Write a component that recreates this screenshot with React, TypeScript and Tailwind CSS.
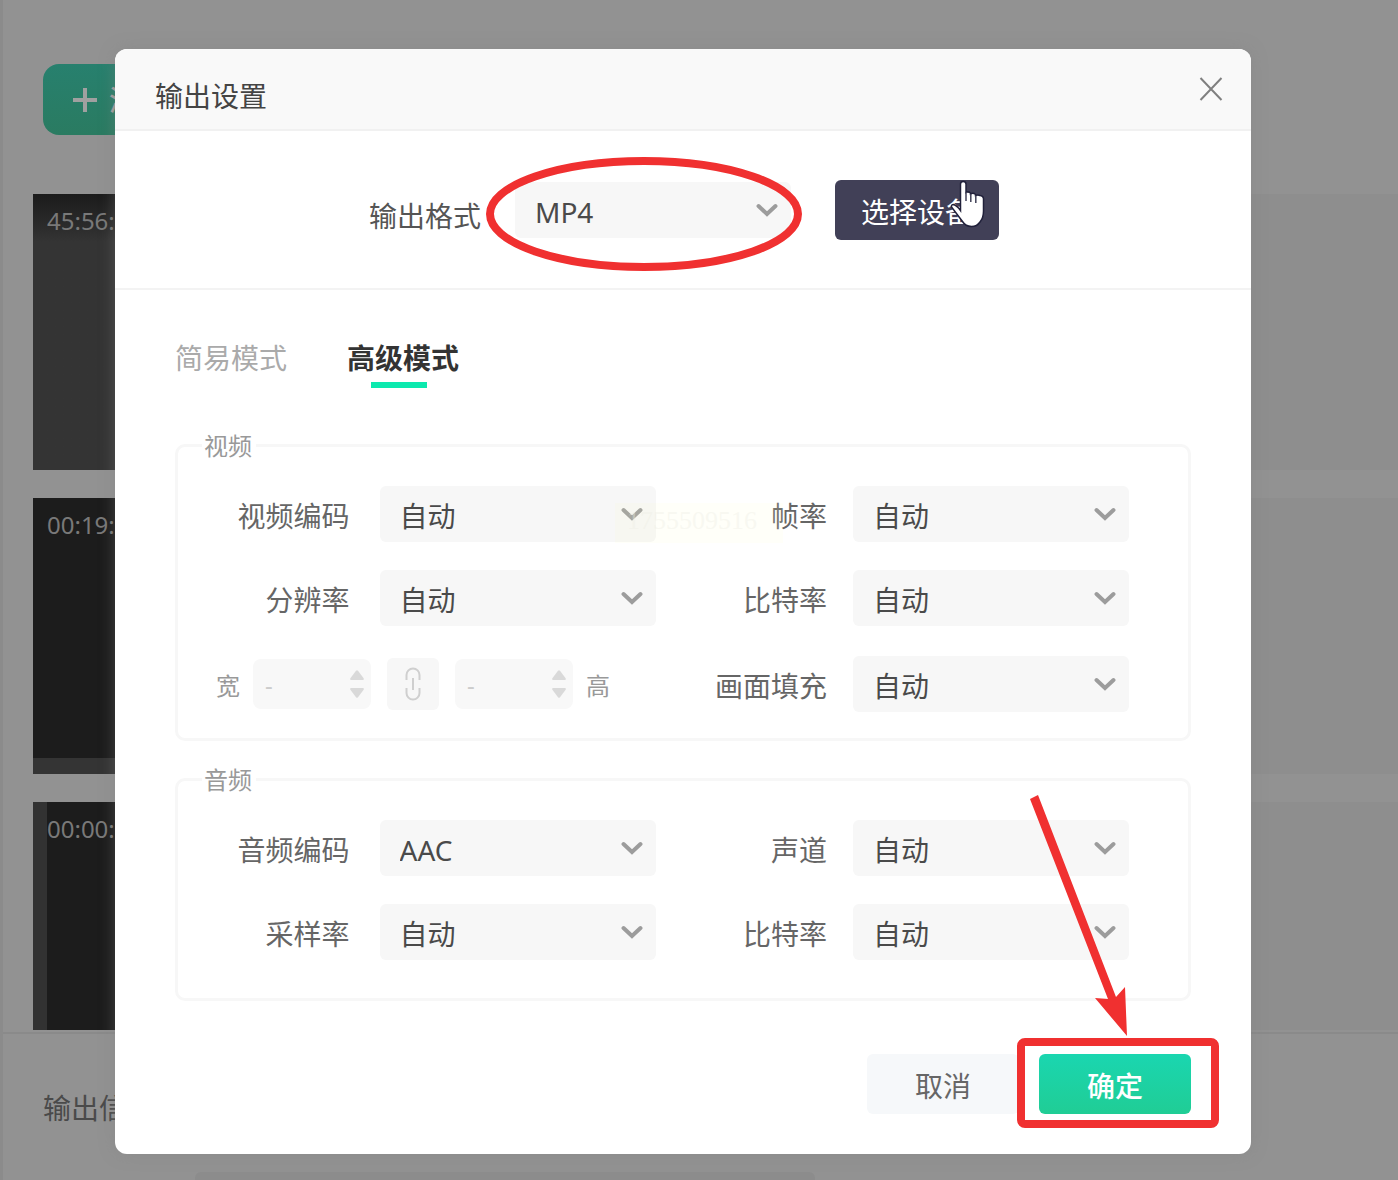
import type { ReactNode } from 'react';

const selectClass =
  'h-14 w-full appearance-none rounded-md bg-[#f7f7f7] pl-5 pr-12 pt-1 text-[28px] leading-[52px] text-[#4a4a4a] outline-none';

function Chevron() {
  return (
    <svg viewBox="0 0 22 14" className="pointer-events-none absolute right-[13px] top-[21px] h-3.5 w-[22px]" fill="none">
      <path d="M2.5 3 11 11l8.5-8" stroke="#9c9c9c" strokeWidth="4" strokeLinecap="round" />
    </svg>
  );
}

function SelectBox({ id, value }: { id: string; value: string }) {
  return (
    <div className="relative w-[276px] shrink-0">
      <select id={id} defaultValue={value} className={selectClass}>
        <option>{value}</option>
      </select>
      <Chevron />
    </div>
  );
}

function Field({ id, label, value, wide }: { id: string; label: string; value: string; wide?: boolean }) {
  return (
    <div className={`flex items-center justify-end ${wide ? 'gap-[30px]' : 'gap-[26px]'}`}>
      <label htmlFor={id} className="pt-1 text-[28px] leading-9 text-[#666]">
        {label}
      </label>
      <SelectBox id={id} value={value} />
    </div>
  );
}

function SizeInput({ id }: { id: string }) {
  return (
    <div className="relative w-[118px]">
      <input
        id={id}
        type="text"
        disabled
        defaultValue="-"
        className="h-[50px] w-full rounded-lg bg-[#f8f8f8] pl-3 text-2xl text-[#ccc]"
      />
      <svg viewBox="0 0 14 28" className="absolute right-[7px] top-[11px] h-7 w-3.5" fill="#d9d9d9">
        <path d="M6 .8q1-1 2 0l5.6 7.4q.8 1.8-.8 1.8H1.2q-1.6 0-.8-1.8z" />
        <path d="M6 27.2q1 1 2 0l5.6-7.4q.8-1.8-.8-1.8H1.2q-1.6 0-.8 1.8z" />
      </svg>
    </div>
  );
}

function Group({ title, className, children }: { title: string; className: string; children: ReactNode }) {
  return (
    <fieldset className={`rounded-[10px] border-[3px] border-[#f7f7f7] pl-1 pr-[59px] pt-[27px] ${className}`}>
      <legend className="ml-5 pl-0.5 pr-1 text-2xl leading-[27px] text-[#999]">{title}</legend>
      <div className="grid grid-cols-2 gap-y-7">{children}</div>
    </fieldset>
  );
}

function HandCursor() {
  return (
    <svg viewBox="0 0 38 50" className="pointer-events-none absolute right-3 top-0 h-[50px] w-[38px]">
      <path
        d="M11.500 4q0-2.500 2.700-2.500T17 4v8.500q2.200-1.500 4.500.5v1q2.700-1.500 5 .5v1q2.500-1 4.500 0 3.500.5 3.500 3.500v12q0 7-3.500 11-3 4.500-8.500 4.500-6 0-9-5L2.500 27q-.5-2.500 2-2.500 3.500 1 7 6z"
        fill="#fff"
        stroke="#20203a"
        strokeWidth="1.500"
      />
      <path d="M17 12v9M21.800 14v8M26.800 15.500v7.500" stroke="#414057" strokeWidth="1.500" />
    </svg>
  );
}

function TaskList() {
  return (
    <div className="flex min-h-0 flex-1 flex-col gap-7 overflow-hidden pl-[33px] text-2xl leading-8 text-[#797979]">
      <div className="h-[276px] shrink-0 bg-[#8e8e8e]">
        <div className="h-full w-[490px] bg-linear-to-b from-[#1b1b1b] to-[#343434] to-[48px] px-3.5 pt-[11px]">
          45:56:
        </div>
      </div>
      <div className="h-[276px] shrink-0 bg-[#8e8e8e]">
        <div className="h-full w-[490px] border-b-16 border-[#343434] bg-[#1c1c1c] px-3.5 pt-[11px]">00:19:</div>
      </div>
      <div className="h-[276px] shrink-0 bg-[#8e8e8e]">
        <div className="h-full w-[490px] border-l-14 border-[#323232] bg-[#1c1c1c] pt-[11px]">00:00:</div>
      </div>
    </div>
  );
}

export default function App() {
  return (
    <div className="relative min-h-screen overflow-hidden bg-[#929292] font-['Noto_Sans','Noto_Sans_CJK_SC',sans-serif]">
      <div className="flex h-screen flex-col border-l-3 border-[#8b8b8b]">
        <div className="-ml-[3px] flex h-[194px] shrink-0 items-start pl-[43px] pt-16">
          <button className="flex h-[71px] w-[210px] items-center gap-3 rounded-2xl bg-linear-to-b from-[#27806e] to-[#2a7b61] pl-[30px] text-[28px] font-medium text-[#a0a0a0]">
            <svg viewBox="0 0 24 24" className="h-6 w-6" fill="none" stroke="#a0a0a0" strokeWidth="4">
              <path d="M12 0v24M0 12h24" />
            </svg>
            添
          </button>
        </div>
        <div className="-ml-[3px] flex min-h-0 flex-1 flex-col">
          <TaskList />
        </div>
        <div className="mt-0.5 flex h-[148px] shrink-0 flex-col justify-between border-t-2 border-[#8a8a8a] pl-10 pt-[54px]">
          <span className="text-[28px] leading-10 text-[#4a4a4a]">输出信息</span>
          <div className="ml-[152px] h-2 w-[620px] rounded-t-md bg-[#8c8c8c]" />
        </div>
      </div>

      <div className="absolute inset-0 pl-[115px] pr-[147px] pt-[49px]">
        <div
          role="dialog"
          aria-labelledby="dialog-title"
          className="overflow-hidden rounded-xl bg-white pb-10 shadow-[0_0_16px_rgba(128,128,128,0.4)]"
        >
          <header className="flex h-[82px] items-center justify-between border-b-2 border-[#f1f1f1] bg-[#f9f9f9] pl-10 pr-7">
            <h1 id="dialog-title" className="pt-3.5 text-[28px] leading-9 text-[#444]">
              输出设置
            </h1>
            <button aria-label="关闭" className="h-6 w-6">
              <svg viewBox="0 0 24 24" fill="none" stroke="#808080" strokeWidth="2">
                <path d="M1.500 1 22.500 23M22.500 1 1.500 23" />
              </svg>
            </button>
          </header>

          <section className="flex h-[159px] items-center border-b-2 border-[#f3f3f3] pl-[254px]">
            <label htmlFor="format" className="mr-[34px] pt-3 text-[28px] leading-9 text-[#555]">
              输出格式
            </label>
            <div className="relative mr-11">
              <SelectBox id="format" value="MP4" />
              <svg
                viewBox="0 0 316 116"
                className="pointer-events-none absolute -left-[29px] -top-[26px] h-[116px] w-[316px] max-w-none"
                fill="none"
              >
                <ellipse cx="158" cy="58" rx="154" ry="53" stroke="#f03030" strokeWidth="8" />
              </svg>
            </div>
            <button className="relative h-[60px] w-[164px] rounded-md bg-[#414057] pt-1 text-[28px] leading-9 text-white">
              选择设备
              <HandCursor />
            </button>
          </section>

          <div className="px-[60px] pt-[50px]">
            <nav className="flex gap-[60px] text-[28px] leading-9">
              <button className="h-12 pb-3 text-[#aaa]">简易模式</button>
              <button className="relative h-12 pb-3 font-bold text-[#333]">
                高级模式
                <span className="absolute bottom-0 left-6 h-1.5 w-14 bg-[#0ce9ae]" />
              </button>
            </nav>

            <div className="relative mt-11">
              <Group title="视频" className="pb-6">
                <Field id="vcodec" label="视频编码" value="自动" wide />
                <Field id="fps" label="帧率" value="自动" />
                <Field id="resolution" label="分辨率" value="自动" wide />
                <Field id="vbitrate" label="比特率" value="自动" />
                <div className="flex h-[60px] items-center gap-[13px] pl-[34px] text-2xl text-[#999]">
                  <label htmlFor="width" className="pt-1">宽</label>
                  <div className="flex items-center gap-4">
                    <SizeInput id="width" />
                    <button disabled aria-label="锁定比例" className="flex h-[52px] w-[52px] items-center justify-center rounded-md bg-[#f7f7f7]">
                      <svg viewBox="0 0 16 34" className="h-[34px] w-4" fill="none" stroke="#cfcfcf" strokeWidth="2">
                        <path d="M1.500 13V8a6.500 6.500 0 0 1 13 0v5M1.500 21v5a6.500 6.500 0 0 0 13 0v-5M8 11v12" />
                      </svg>
                    </button>
                    <SizeInput id="height" />
                  </div>
                  <label htmlFor="height" className="pt-1">高</label>
                </div>
                <Field id="fill" label="画面填充" value="自动" />
              </Group>
              <span className="pointer-events-none absolute left-[440px] top-[71px] h-10 w-[168px] bg-[#ffffc8]/10 pl-3 font-['Liberation_Serif',serif] text-[26px] leading-9 text-[#eeeee4]/40">
                1755509516
              </span>
            </div>

            <Group title="音频" className="mt-[25px] pb-[38px]">
              <Field id="acodec" label="音频编码" value="AAC" wide />
              <Field id="channel" label="声道" value="自动" />
              <Field id="samplerate" label="采样率" value="自动" wide />
              <Field id="abitrate" label="比特率" value="自动" />
            </Group>

            <footer className="mt-[53px] flex justify-end gap-5 text-[28px] leading-9">
              <button className="h-[60px] w-[152px] rounded-md bg-[#f6f8fa] pt-1 text-[#666]">取消</button>
              <div className="relative">
                <button className="h-[60px] w-[152px] rounded-md bg-linear-to-b from-[#1ad6b0] to-[#20cd95] pt-1 font-medium text-white">
                  确定
                </button>
                <span className="pointer-events-none absolute -bottom-3.5 -left-[22px] -right-7 -top-4 rounded-lg border-8 border-[#f03030]" />
                <svg
                  viewBox="0 0 100 244"
                  className="pointer-events-none absolute -left-[11px] -top-[260px] h-[244px] w-[100px] max-w-none"
                  fill="#f03030"
                >
                  <path d="M2 5 10 1 88 203 97 193 99 242 67 204 80 205z" />
                </svg>
              </div>
            </footer>
          </div>
        </div>
      </div>
    </div>
  );
}
